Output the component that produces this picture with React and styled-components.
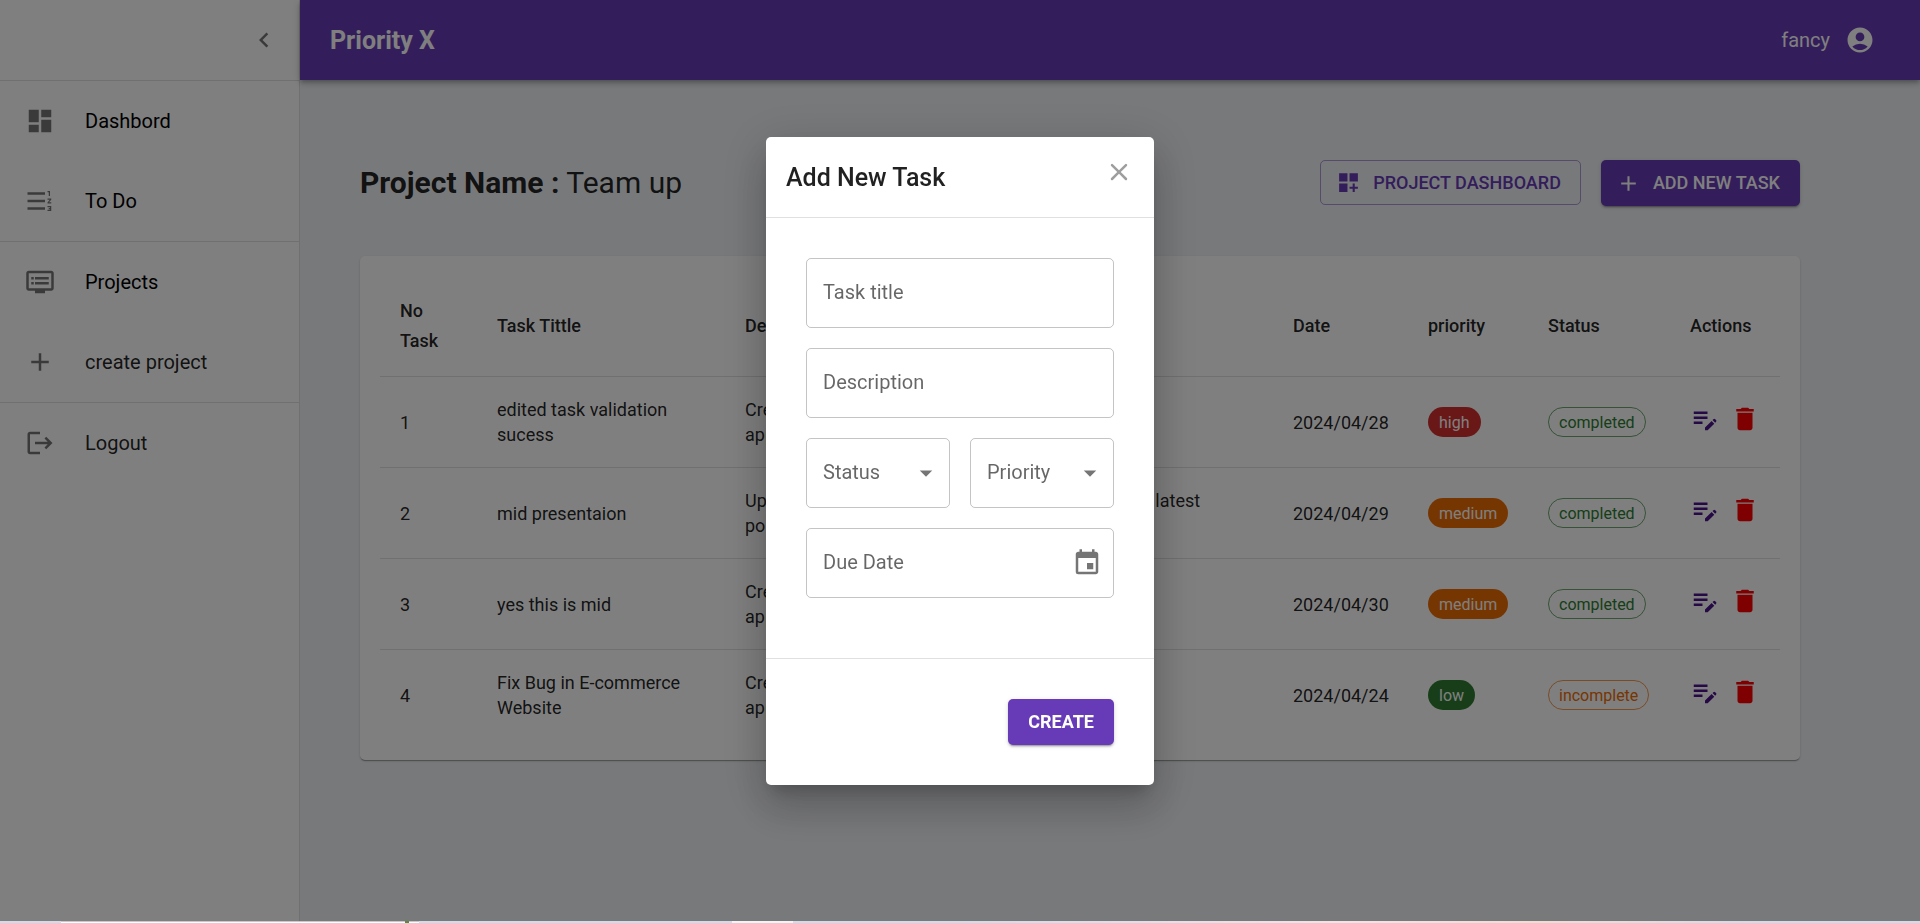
import React from "react";
import styled, { createGlobalStyle } from "styled-components";
import {
  MdAccountCircle,
  MdAdd,
  MdArrowDropDown,
  MdChevronLeft,
  MdDashboard,
  MdDashboardCustomize,
  MdDelete,
  MdDvr,
  MdEditNote,
  MdEvent,
  MdFormatListNumberedRtl,
  MdLogout,
} from "react-icons/md";

const PURPLE = "#673ab7";
const INK = "rgba(0, 0, 0, 0.87)";
const MUTED = "rgba(0, 0, 0, 0.6)";
const LINE = "rgba(0, 0, 0, 0.12)";

const GlobalStyle = createGlobalStyle`
  *, *::before, *::after { box-sizing: border-box; }
  body {
    margin: 0;
    background: #f1f3f6;
    color: ${INK};
    font-family: Roboto, "Liberation Sans", sans-serif;
    font-size: 20px;
    line-height: 30px;
  }
  button, input, select { font: inherit; color: inherit; }
`;

const Page = styled.div`
  display: flex;
  flex-direction: column;
  min-height: 100vh;
`;

const Shell = styled.div`
  display: flex;
  flex: 1;
`;

const Sidebar = styled.aside`
  flex: 0 0 300px;
  background: #fff;
  border-right: 1px solid ${LINE};
`;

const SidebarHeader = styled.div`
  display: flex;
  align-items: center;
  justify-content: flex-end;
  height: 80px;
  padding: 0 10px;
`;

const IconButton = styled.button`
  display: flex;
  padding: 10px;
  border: 0;
  border-radius: 50%;
  background: none;
  color: ${(p) => p.$color || "rgba(0, 0, 0, 0.54)"};
  cursor: pointer;
`;

const NavGroup = styled.nav`
  border-top: 1px solid ${LINE};
`;

const NavItem = styled.a`
  display: flex;
  align-items: center;
  gap: 30px;
  height: 80px;
  padding: 0 25px;
  color: ${(p) => (p.$strong ? "#000" : INK)};
  text-decoration: none;

  svg {
    color: rgba(0, 0, 0, 0.54);
  }
`;

const Main = styled.div`
  flex: 1;
  min-width: 0;
`;

const TopBar = styled.header`
  display: flex;
  align-items: center;
  justify-content: space-between;
  height: 80px;
  padding: 0 45px 0 30px;
  background: ${PURPLE};
  color: #fff;
  box-shadow: 0 2px 4px -1px rgba(0, 0, 0, 0.2), 0 4px 5px rgba(0, 0, 0, 0.14),
    0 1px 10px rgba(0, 0, 0, 0.12);
`;

const Brand = styled.div`
  padding-top: 2px;
  font-size: 25px;
  font-weight: 700;
`;

const Account = styled.div`
  display: flex;
  align-items: center;
  gap: 15px;
`;

const Content = styled.main`
  padding: 80px 120px 60px 60px;
`;

const TitleRow = styled.div`
  display: flex;
  align-items: flex-start;
  justify-content: space-between;
  margin-bottom: 50px;
`;

const Title = styled.h1`
  margin: 0;
  font-size: 30px;
  font-weight: 400;
  line-height: 46px;
`;

const Actions = styled.div`
  display: flex;
  align-items: flex-start;
  gap: 20px;
`;

const Button = styled.button`
  display: flex;
  align-items: center;
  gap: 12px;
  height: 46px;
  padding: 0 20px ${(p) => (p.$icon ? "0 15px" : "")};
  border: 0;
  border-radius: 5px;
  background: ${PURPLE};
  color: #fff;
  font-size: 18px;
  font-weight: ${(p) => (p.$bold ? 700 : 500)};
  text-transform: uppercase;
  white-space: nowrap;
  cursor: pointer;
  box-shadow: 0 3px 1px -2px rgba(0, 0, 0, 0.2), 0 2px 2px rgba(0, 0, 0, 0.14),
    0 1px 5px rgba(0, 0, 0, 0.12);
`;

const OutlinedButton = styled(Button)`
  height: 45px;
  padding: 0 19px 0 15px;
  border: 1px solid rgba(103, 58, 183, 0.5);
  background: none;
  color: ${PURPLE};
  box-shadow: none;
`;

const Card = styled.section`
  padding: 20px;
  border-radius: 5px;
  background: #fff;
  box-shadow: 0 2px 1px -1px rgba(0, 0, 0, 0.2), 0 1px 1px rgba(0, 0, 0, 0.14),
    0 1px 3px rgba(0, 0, 0, 0.12);
`;

const Table = styled.table`
  width: 100%;
  table-layout: fixed;
  border-collapse: separate;
  border-spacing: 0;
  font-size: 18px;
`;

const Col = styled.col`
  width: ${(p) => (p.$width ? `${p.$width}px` : "auto")};
`;

const HeadCell = styled.th`
  padding: 20px;
  border-bottom: 1px solid ${LINE};
  font-weight: 500;
  line-height: 30px;
  text-align: left;
`;

const Cell = styled.td`
  height: 91px;
  padding: 0 20px;
  border-bottom: 1px solid ${LINE};
  line-height: 25px;
  white-space: pre-line;

  tr:last-child > & {
    height: 90px;
    border-bottom: 0;
  }
`;

const Chip = styled.span`
  display: flex;
  align-items: center;
  width: max-content;
  height: 30px;
  padding: 0 ${(p) => (p.$outlined ? 10 : 11)}px;
  border: ${(p) => (p.$outlined ? `1px solid ${p.$outlined}` : "0")};
  border-radius: 15px;
  background: ${(p) => p.$fill || "none"};
  color: ${(p) => p.$color};
  font-size: 16px;
`;

const RowActions = styled.div`
  display: flex;
  gap: 10px;
  padding-bottom: 6px;
`;

const RowButton = styled.button`
  display: flex;
  padding: 0;
  border: 0;
  background: none;
  color: ${(p) => p.$color};
  cursor: pointer;
`;

const Backdrop = styled.div`
  position: fixed;
  inset: 0 0 2px;
  z-index: 10;
  display: flex;
  align-items: center;
  justify-content: center;
  background: rgba(0, 0, 0, 0.5);
`;

const Dialog = styled.form`
  width: 388px;
  border-radius: 5px;
  background: #fff;
  box-shadow: 0 11px 15px -7px rgba(0, 0, 0, 0.2),
    0 24px 38px 3px rgba(0, 0, 0, 0.14), 0 9px 46px 8px rgba(0, 0, 0, 0.12);
`;

const DialogHeader = styled.div`
  display: flex;
  align-items: flex-start;
  justify-content: space-between;
  height: 80px;
  padding: 10px 10px 0 20px;
`;

const DialogTitle = styled.h2`
  margin: 10px 0;
  font-size: 25px;
  font-weight: 500;
  line-height: 42px;
`;

const Fields = styled.div`
  display: grid;
  grid-template-columns: 1fr 1fr;
  gap: 20px;
  padding: 40px 40px 60px;
  border: solid ${LINE};
  border-width: 1px 0;
`;

const DialogActions = styled.div`
  display: flex;
  justify-content: flex-end;
  padding: 40px;
`;

const Field = styled.div`
  display: grid;
  grid-column: span ${(p) => p.$span || 1};
  grid-template-columns: minmax(0, 1fr);
  align-items: center;
  height: 70px;
  border: 1px solid rgba(0, 0, 0, 0.23);
  border-radius: 5px;

  > * {
    grid-area: 1 / 1;
  }

  > svg {
    justify-self: end;
    margin-right: 8px;
    color: rgba(0, 0, 0, 0.54);
    pointer-events: none;
  }

  > button {
    justify-self: end;
    padding-right: 11px;
  }
`;

const Control = styled.input`
  width: 100%;
  height: 68px;
  padding: 0 16px;
  border: 0;
  border-radius: 5px;
  outline-color: ${PURPLE};
  background: none;
  appearance: none;
`;

const Label = styled.label`
  padding: 0 0 2px 16px;
  color: ${MUTED};
  pointer-events: none;

  input:not(:placeholder-shown) + &,
  select:valid + & {
    visibility: hidden;
  }
`;

const Taskbar = styled.div`
  display: flex;
  height: 2px;
  background: linear-gradient(90deg, #d0dce8 50%, #f2e3e6 70%, #f0dcd6 80%, #d0dce8 92%);
`;

const TaskbarTab = styled.div`
  width: ${(p) => p.$width}px;
  margin-left: ${(p) => p.$before}px;
  border-top: 1px solid ${(p) => p.$edge || p.$color};
  background: ${(p) => p.$color};
`;

const CloseIcon = () => (
  <svg width="30" height="30" viewBox="0 0 24 24" fill="currentColor" aria-hidden="true">
    <path d="M18.3 5.71a.9959.9959 0 0 0-1.41 0L12 10.59 7.11 5.7a.9959.9959 0 0 0-1.41 0c-.39.39-.39 1.02 0 1.41L10.59 12 5.7 16.89c-.39.39-.39 1.02 0 1.41.39.39 1.02.39 1.41 0L12 13.41l4.89 4.89c.39.39 1.02.39 1.41 0 .39-.39.39-1.02 0-1.41L13.41 12l4.89-4.89c.38-.38.38-1.02 0-1.4z" />
  </svg>
);

const PRIORITY = { high: "#d32f2f", medium: "#ed6c02", low: "#2e7d32" };

const STATUS = {
  completed: { $color: "#2e7d32", $outlined: "rgba(46, 125, 50, 0.7)" },
  incomplete: { $color: "#ed6c02", $outlined: "rgba(237, 108, 2, 0.7)" },
};

const TASKS = [
  {
    title: "edited task validation sucess",
    description: "Create a new feature for the mobile\napplication",
    date: "2024/04/28",
    priority: "high",
    status: "completed",
  },
  {
    title: "mid presentaion",
    description: "Update the company website presentation with our latest\nportfolio",
    date: "2024/04/29",
    priority: "medium",
    status: "completed",
  },
  {
    title: "yes this is mid",
    description: "Create a new feature for the mobile\napplication",
    date: "2024/04/30",
    priority: "medium",
    status: "completed",
  },
  {
    title: "Fix Bug in E-commerce Website",
    description: "Create a new feature for the mobile\napplication",
    date: "2024/04/24",
    priority: "low",
    status: "incomplete",
  },
];

const COLUMNS = [
  ["No Task", 97],
  ["Task Tittle", 248],
  ["Description", 0],
  ["Date", 135],
  ["priority", 120],
  ["Status", 142],
  ["Actions", 110],
];

function TaskRow({ number, task }) {
  return (
    <tr>
      <Cell>{number}</Cell>
      <Cell>{task.title}</Cell>
      <Cell>{task.description}</Cell>
      <Cell>{task.date}</Cell>
      <Cell>
        <Chip $fill={PRIORITY[task.priority]} $color="#fff">{task.priority}</Chip>
      </Cell>
      <Cell>
        <Chip {...STATUS[task.status]}>{task.status}</Chip>
      </Cell>
      <Cell>
        <RowActions>
          <RowButton type="button" $color="#4a148c" aria-label="Edit task">
            <MdEditNote size={30} />
          </RowButton>
          <RowButton type="button" $color="#f00" aria-label="Delete task">
            <MdDelete size={30} />
          </RowButton>
        </RowActions>
      </Cell>
    </tr>
  );
}

function SelectField({ id, label, options }) {
  return (
    <Field>
      <Control as="select" id={id} required defaultValue="">
        <option value="" />
        {options.map((o) => (
          <option key={o}>{o}</option>
        ))}
      </Control>
      <Label htmlFor={id}>{label}</Label>
      <MdArrowDropDown size={30} />
    </Field>
  );
}

function AddTaskDialog() {
  return (
    <Backdrop>
      <Dialog role="dialog" aria-labelledby="dialog-title">
        <DialogHeader>
          <DialogTitle id="dialog-title">Add New Task</DialogTitle>
          <IconButton type="button" $color="#9e9e9e" aria-label="Close">
            <CloseIcon />
          </IconButton>
        </DialogHeader>
        <Fields>
          <Field $span={2}>
            <Control id="task-title" placeholder=" " />
            <Label htmlFor="task-title">Task title</Label>
          </Field>
          <Field $span={2}>
            <Control id="description" placeholder=" " />
            <Label htmlFor="description">Description</Label>
          </Field>
          <SelectField id="status" label="Status" options={["completed", "incomplete"]} />
          <SelectField id="priority" label="Priority" options={["high", "medium", "low"]} />
          <Field $span={2}>
            <Control id="due-date" placeholder=" " />
            <Label htmlFor="due-date">Due Date</Label>
            <IconButton type="button" aria-label="Choose date">
              <MdEvent size={30} />
            </IconButton>
          </Field>
        </Fields>
        <DialogActions>
          <Button type="button" $bold>Create</Button>
        </DialogActions>
      </Dialog>
    </Backdrop>
  );
}

export default function App() {
  return (
    <Page>
      <GlobalStyle />
      <Shell>
        <Sidebar>
          <SidebarHeader>
            <IconButton type="button" aria-label="Collapse sidebar">
              <MdChevronLeft size={30} />
            </IconButton>
          </SidebarHeader>
          <NavGroup>
            <NavItem href="#dashboard" $strong><MdDashboard size={30} />Dashbord</NavItem>
            <NavItem href="#todo" $strong><MdFormatListNumberedRtl size={30} />To Do</NavItem>
          </NavGroup>
          <NavGroup>
            <NavItem href="#projects" $strong><MdDvr size={30} />Projects</NavItem>
            <NavItem href="#create"><MdAdd size={30} />create project</NavItem>
          </NavGroup>
          <NavGroup>
            <NavItem href="#logout"><MdLogout size={30} />Logout</NavItem>
          </NavGroup>
        </Sidebar>
        <Main>
          <TopBar>
            <Brand>Priority X</Brand>
            <Account>
              fancy
              <MdAccountCircle size={30} />
            </Account>
          </TopBar>
          <Content>
            <TitleRow>
              <Title><b>Project Name :</b> Team up</Title>
              <Actions>
                <OutlinedButton type="button">
                  <MdDashboardCustomize size={25} />
                  Project Dashboard
                </OutlinedButton>
                <Button type="button" $icon>
                  <MdAdd size={25} />
                  Add new task
                </Button>
              </Actions>
            </TitleRow>
            <Card>
              <Table>
                <colgroup>
                  {COLUMNS.map(([name, width]) => (
                    <Col key={name} $width={width} />
                  ))}
                </colgroup>
                <thead>
                  <tr>
                    {COLUMNS.map(([name]) => (
                      <HeadCell key={name} scope="col">{name}</HeadCell>
                    ))}
                  </tr>
                </thead>
                <tbody>
                  {TASKS.map((task, i) => (
                    <TaskRow key={task.title} number={i + 1} task={task} />
                  ))}
                </tbody>
              </Table>
            </Card>
          </Content>
        </Main>
      </Shell>
      <Taskbar>
        <TaskbarTab $before={61} $width={344} $color="#fff" $edge="#c8c8c8" />
        <TaskbarTab $before={0} $width={4} $color="#5a8a3c" />
        <TaskbarTab $before={0} $width={10} $color="#fff" $edge="#c8c8c8" />
        <TaskbarTab $before={313} $width={61} $color="#f2f4f6" />
      </Taskbar>
      <AddTaskDialog />
    </Page>
  );
}
